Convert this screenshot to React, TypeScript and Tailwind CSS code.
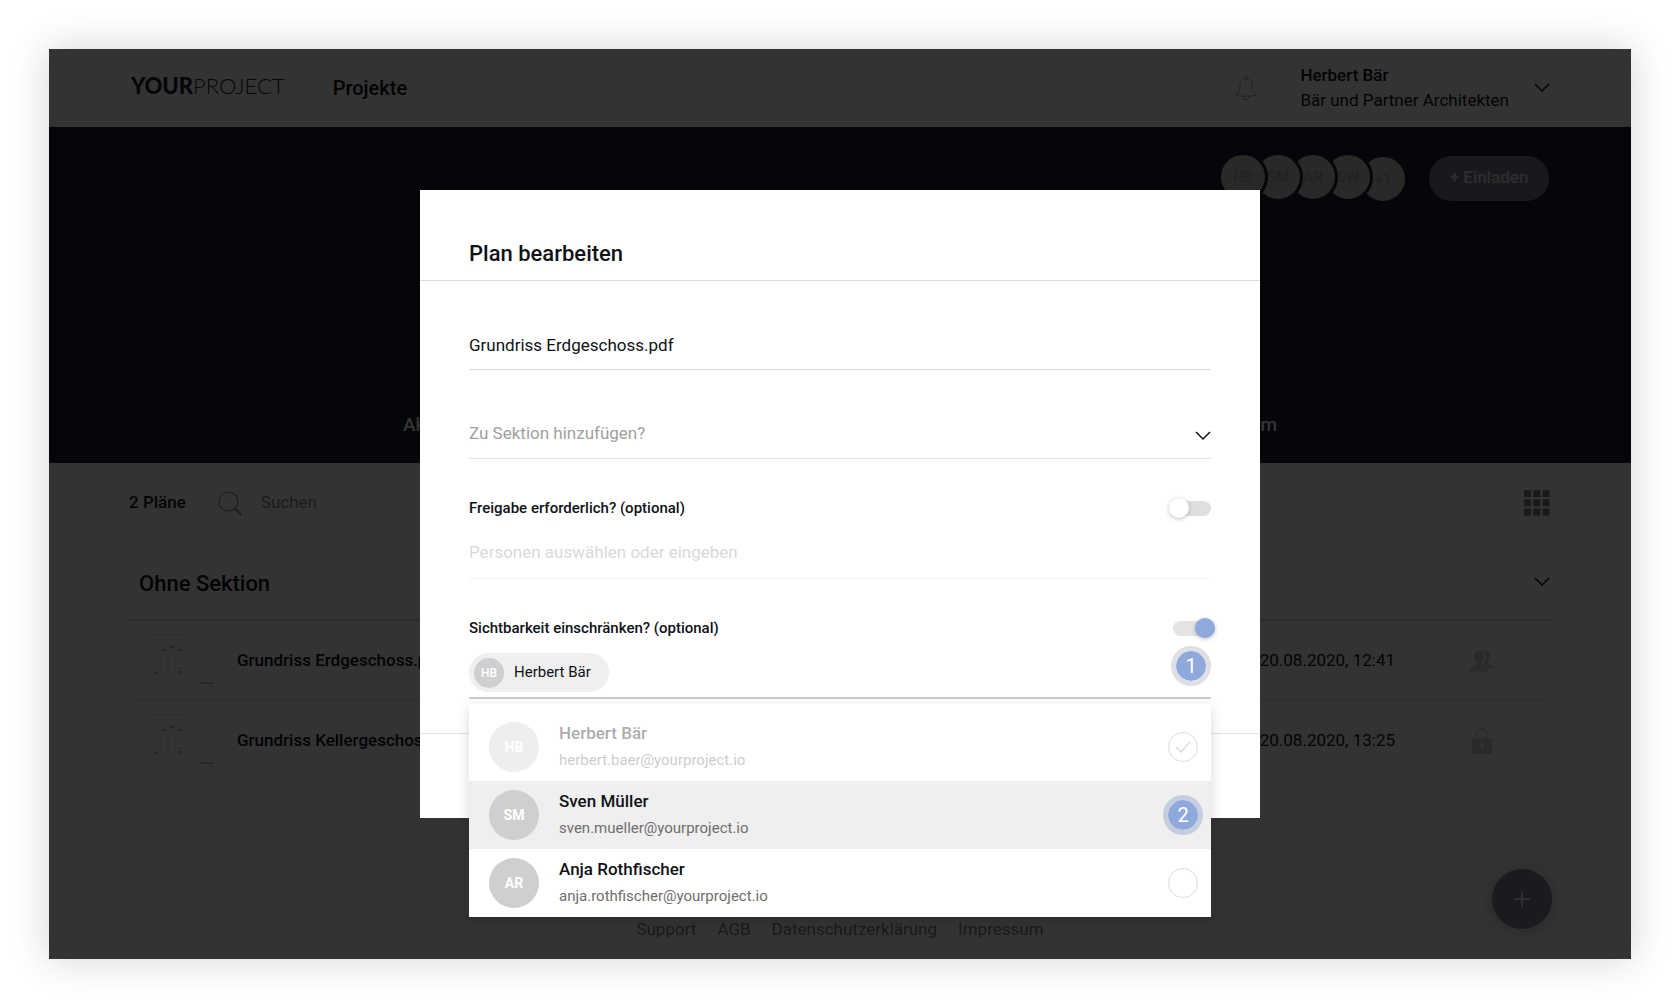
import React, { useState } from 'react';

interface Person {
  initials: string;
  name: string;
  email: string;
}

interface Plan {
  name: string;
  date: string;
  access: 'group' | 'locked';
}

const people: Person[] = [
  { initials: 'HB', name: 'Herbert Bär', email: 'herbert.baer@yourproject.io' },
  { initials: 'SM', name: 'Sven Müller', email: 'sven.mueller@yourproject.io' },
  { initials: 'AR', name: 'Anja Rothfischer', email: 'anja.rothfischer@yourproject.io' },
];

const plans: Plan[] = [
  { name: 'Grundriss Erdgeschoss.pdf', date: '20.08.2020, 12:41', access: 'group' },
  { name: 'Grundriss Kellergeschoss.pdf', date: '20.08.2020, 13:25', access: 'locked' },
];

const footerLinks = ['Support', 'AGB', 'Datenschutzerklärung', 'Impressum'];

const Chevron = ({ className = '' }: { className?: string }) => (
  <svg className={className} width="16" height="10" viewBox="0 0 16 10" fill="none" stroke="currentColor" strokeWidth="1.5">
    <path d="M1 1l7 7 7-7" />
  </svg>
);

const BellIcon = () => (
  <svg width="22" height="26" viewBox="0 0 22 26" fill="none" stroke="currentColor" strokeWidth="1">
    <circle cx="11" cy="2.3" r="1.6" />
    <path d="M11 3.800c-3.800 0-6 2.700-6 6.400 0 4.600-1 6.300-3.100 8-1.700 1.400-1.200 2.200.6 2.500 5 .8 12 .8 17 0 1.800-.3 2.300-1.100.6-2.500-2.100-1.700-3.100-3.400-3.100-8 0-3.700-2.200-6.400-6-6.400z" />
    <path d="M8.300 21.300c0 2.300 1 3.600 2.700 3.600s2.700-1.300 2.700-3.600" />
  </svg>
);

const SearchIcon = () => (
  <svg width="25" height="25" viewBox="0 0 25 25" fill="none" stroke="currentColor">
    <circle cx="10.500" cy="10.500" r="9.500" strokeWidth="1.200" />
    <path d="M17 17.500l6.500 6.500" strokeWidth="2" />
  </svg>
);

const GridIcon = () => (
  <svg width="26" height="26" viewBox="0 0 26 26" fill="currentColor">
    {[0, 9.3, 18.6].map((y) => [0, 9.3, 18.6].map((x) => <rect key={`${x}-${y}`} x={x} y={y} width="7" height="7" />))}
  </svg>
);

const GroupIcon = () => (
  <svg width="26" height="24" viewBox="0 0 26 24" fill="currentColor">
    <path d="M10 1.500c3.200 0 5 2.200 5 5.500 0 2.600-1 4.300-2.200 5.500v2c0 1.700 6.700 2.300 7.200 8H0c.5-5.700 7.200-6.300 7.200-8v-2C6 11.300 5 9.600 5 7c0-3.300 1.800-5.500 5-5.500z" />
    <path d="M14.500 1.700c4-1 6.500 1.500 6.500 5.100 0 2.400-.8 4-2 5.200v1.800c0 1.700 6.500 1.700 7 5.700h-6.500c-1.200-2.500-3.600-3.300-4.500-4.200v-2.100c2.700-3.600 2.800-8.700-.5-11.500z" />
  </svg>
);

const LockIcon = () => (
  <svg width="22" height="26" viewBox="0 0 22 26">
    <path d="M5 10.500V7a6 6 0 0 1 12 0v3.500" fill="none" stroke="currentColor" strokeWidth="1.300" />
    <path fill="currentColor" fillRule="evenodd" d="M1.500 10h19a.8.8 0 0 1 .8.8V24a2 2 0 0 1-2 2H2.700a2 2 0 0 1-2-2V10.800a.8.8 0 0 1 .8-.8zM11 14.500a1.700 1.700 0 0 0-1 3V21h2v-3.500a1.700 1.700 0 0 0-1-3z" />
  </svg>
);

const PlanThumbnail = () => (
  <svg className="ml-2 shrink-0" width="82" height="54" viewBox="0 0 82 54" fill="none" stroke="#cdc9bc" strokeWidth=".5">
    <rect x=".5" y=".5" width="81" height="52" rx="1" stroke="#ece9e2" strokeWidth="1" />
    <path d="M13 2h40M13 5h40M12 10h42v35H12zM12 18h42M12 26h42M12 34h42M12 41h42M18 26v15M24 18v23M31 26v15M38 18v23M44 26v15M49 26v15" />
    <path d="M57 20v26M60 20v26M57 26h5M57 34h5M57 40h5M65 8v28M68 8v28M71 6v30M5 19v2M5 28v2M5 38v2" strokeDasharray="3 2" />
    <path d="M25 16h5M40 16h5M32 13h5M17 39h4M41 38h4M64 49h13" stroke="#b4b0a2" strokeWidth="1.500" />
  </svg>
);

const StepBadge = ({ step, className = '' }: { step: number; className?: string }) => (
  <span
    className={`absolute flex size-10 items-center justify-center rounded-full border-[5px] bg-[#8fa9dc] bg-clip-padding text-xl text-white ${className}`}
  >
    {step}
  </span>
);

interface ToggleProps {
  id: string;
  label: string;
  checked: boolean;
  onChange: (checked: boolean) => void;
}

const ToggleRow = ({ id, label, checked, onChange }: ToggleProps) => (
  <div className="flex h-5 items-center justify-between">
    <label htmlFor={id} className="text-[15px] font-medium">
      {label}
    </label>
    <input
      id={id}
      type="checkbox"
      checked={checked}
      onChange={(e) => onChange(e.target.checked)}
      className="relative h-[15px] w-[38px] appearance-none rounded-full bg-[#dddfe3] before:absolute before:-top-[3px] before:-left-1 before:size-5 before:rounded-full before:bg-white before:shadow-[0_1px_4px_rgba(0,0,0,0.25)] checked:bg-[#e2e4e5] checked:before:left-[22px] checked:before:bg-[#8fa9dc]"
    />
  </div>
);

const ProjectPage = () => (
  <>
    <header className="flex h-[78px] items-center px-20">
      <a href="#" className="mb-1.5 ml-0.5 font-[Lato] text-[22px] text-[#191e32]">
        <span className="font-black">YOUR</span>
        <span className="font-light">PROJECT</span>
      </a>
      <a href="#" className="ml-12 text-xl font-medium">
        Projekte
      </a>
      <button aria-label="Benachrichtigungen" className="ml-auto text-[#9a9a9a]">
        <BellIcon />
      </button>
      <button className="ml-[43px] flex items-center gap-[25px] text-left text-[17px] leading-[25px]">
        <span>
          <span className="block font-medium">Herbert Bär</span>
          <span className="block">Bär und Partner Architekten</span>
        </span>
        <Chevron className="mr-px" />
      </button>
    </header>

    <section className="flex h-[336px] flex-col justify-between bg-[#191e32] px-20">
      <div className="flex items-center justify-end pt-[25px] pr-0.5">
        <div className="isolate flex items-start text-[15px] font-medium text-[#aaaaa5]">
          {['HB', 'SM', 'AR', 'SW'].map((initials, i) => (
            <span
              key={initials}
              style={{ zIndex: 5 - i }}
              className="-mr-[15px] flex size-[50px] items-center justify-center rounded-full border-[3px] border-[#191e32] bg-[#cbcbc6]"
            >
              {initials}
            </span>
          ))}
          <span className="mt-0.5 flex size-[50px] items-center justify-center rounded-full border-[3px] border-[#191e32] bg-[#cbcbc6]">+1</span>
        </div>
        <button className="ml-[21px] h-[45px] w-[120px] rounded-full bg-[#787e91] text-[17px] font-medium text-[#e1e1e1]">
          + Einladen
        </button>
      </div>
      <nav className="mx-auto mb-6 flex w-[874px] justify-between text-[19px] font-medium text-white">
        <a href="#">Aktivitäten</a>
        <a href="#">Pläne</a>
        <a href="#">Team</a>
      </nav>
    </section>

    <main className="px-20">
      <div className="flex h-20 items-center pr-px">
        <span className="text-[17px] font-medium">2 Pläne</span>
        <span className="ml-8 text-[#8c8c8c]">
          <SearchIcon />
        </span>
        <input aria-label="Suchen" placeholder="Suchen" className="ml-[18px] w-60 text-[17px] placeholder:text-[#8c8c8c]" />
        <button aria-label="Kachelansicht" className="ml-auto text-[#787e91]">
          <GridIcon />
        </button>
      </div>
      <div className="flex h-[78px] items-center justify-between border-b-2 border-[#dcd9d0] pt-1 pr-px">
        <h2 className="ml-2.5 text-[22px] font-medium">Ohne Sektion</h2>
        <Chevron className="mb-0.5" />
      </div>
      <ul className="divide-y divide-[#e4e2dc] text-[17px]">
        {plans.map((plan) => (
          <li key={plan.name} className="flex h-20 items-center">
            <PlanThumbnail />
            <span className="ml-[18px] font-medium">{plan.name}</span>
            <span className="ml-auto">{plan.date}</span>
            <span className="mr-[55px] ml-[73px] flex w-7 justify-center text-[#d2d0c6]">
              {plan.access === 'group' ? <GroupIcon /> : <LockIcon />}
            </span>
          </li>
        ))}
      </ul>
    </main>

    <footer className="mt-auto flex justify-center gap-[21px] pb-[17px] text-[17px] text-[#82828a]">
      {footerLinks.map((link) => (
        <a key={link} href="#">
          {link}
        </a>
      ))}
    </footer>
    <button
      aria-label="Plan hinzufügen"
      className="absolute right-[79px] bottom-[30px] flex size-[60px] items-center justify-center rounded-full bg-[#82879b] text-[#e6e6e6] shadow-[0_2px_20px_rgba(0,0,0,0.25)]"
    >
      <svg width="16" height="16" viewBox="0 0 16 16" stroke="currentColor" strokeWidth="2">
        <path d="M8 0v16M0 8h16" />
      </svg>
    </button>
  </>
);

interface PersonOptionProps {
  person: Person;
  disabled: boolean;
  highlighted: boolean;
}

const PersonOption = ({ person, disabled, highlighted }: PersonOptionProps) => (
  <li className={highlighted ? 'relative bg-[#efefef]' : 'relative'}>
    <label className={`flex h-[68px] items-center pr-[13px] pl-5 ${disabled ? 'opacity-35' : ''}`}>
      <span className="flex size-[50px] items-center justify-center rounded-full bg-[#cfcfd1] text-sm font-bold text-white">
        {person.initials}
      </span>
      <span className="mb-0.5 ml-5">
        <span className="block text-[17px] leading-7 font-medium">{person.name}</span>
        <span className="block text-[15px] leading-[26px] text-[#6e6e6e]">{person.email}</span>
      </span>
      <input
        type="checkbox"
        defaultChecked={disabled}
        disabled={disabled}
        className="peer ml-auto size-[30px] appearance-none rounded-full border border-[#dcdcdc] disabled:border-[#a0a0a0]"
      />
      <svg className="absolute right-5 hidden peer-checked:block" width="16" height="12" viewBox="0 0 16 12" fill="none" stroke="#a0a0a0" strokeWidth="1.500">
        <path d="M1 6l5 5 9-10" />
      </svg>
    </label>
    {highlighted && <StepBadge step={2} className="top-[14px] right-2 border-[#c5cede]" />}
  </li>
);

const EditPlanDialog = () => {
  const [approval, setApproval] = useState(false);
  const [restricted, setRestricted] = useState(true);

  return (
    <div role="dialog" aria-labelledby="dialog-title" className="w-[840px] bg-white">
      <div className="flex h-[91px] items-end border-b border-[#dedede] px-[49px] pb-2.5">
        <h1 id="dialog-title" className="text-[22px] font-medium">
          Plan bearbeiten
        </h1>
      </div>
      <form className="px-[49px] pt-[39px] pb-[34px]">
        <input
          aria-label="Name"
          defaultValue="Grundriss Erdgeschoss.pdf"
          className="block h-[50px] w-full border-b border-[#d8d8d8] text-[17px]"
        />
        <div className="relative mt-[39px]">
          <select
            aria-label="Sektion"
            className="block h-[50px] w-full appearance-none border-b border-[#e2e2e2] text-[17px] text-[#a0a0a0]"
          >
            <option>Zu Sektion hinzufügen?</option>
            <option>Ohne Sektion</option>
          </select>
          <Chevron className="pointer-events-none absolute top-[22px] right-0" />
        </div>

        <div className="mt-[39px]">
          <ToggleRow id="approval" label="Freigabe erforderlich? (optional)" checked={approval} onChange={setApproval} />
        </div>
        <input
          aria-label="Personen für Freigabe"
          placeholder="Personen auswählen oder eingeben"
          disabled={!approval}
          className="mt-[11px] block h-[50px] w-full border-b border-[#f2f2f2] pb-[3px] text-[17px] placeholder:text-[#d9d9d9]"
        />

        <div className="mt-[39px]">
          <ToggleRow id="restricted" label="Sichtbarkeit einschränken? (optional)" checked={restricted} onChange={setRestricted} />
        </div>
        <div className="relative mt-[15px] border-b-2 border-[#cbcbcb] pb-[5px]">
          <span className="inline-flex h-[39px] items-center rounded-full bg-[#efefef] pr-[18px] pl-[5px] align-top text-[15px]">
            <span className="mr-2.5 flex size-[30px] items-center justify-center rounded-full bg-[#cfcfd1] text-xs font-medium text-white">
              HB
            </span>
            Herbert Bär
          </span>
          <StepBadge step={1} className="-top-[7px] right-0 border-[#dfe0e5]" />
          <ul className="absolute inset-x-0 top-[51px] bg-white pt-[9px] shadow-[0_4px_12px_rgba(0,0,0,0.15)]">
            {people.map((person, i) => (
              <PersonOption key={person.email} person={person} disabled={i === 0} highlighted={i === 1} />
            ))}
          </ul>
        </div>
      </form>
      <div className="h-[85px] border-t border-[#e3e4ea]" />
    </div>
  );
};

const App: React.FC = () => {
  return (
    <div className="flex min-h-screen bg-white p-[49px] font-[Roboto,sans-serif] text-[#101218]">
      <div className="relative flex flex-1 flex-col bg-white shadow-[0_0_36px_rgba(0,0,0,0.18)]">
        <ProjectPage />
        <div className="absolute inset-0 z-10 flex items-center justify-center bg-black/80">
          <EditPlanDialog />
        </div>
      </div>
    </div>
  );
};

export default App;
